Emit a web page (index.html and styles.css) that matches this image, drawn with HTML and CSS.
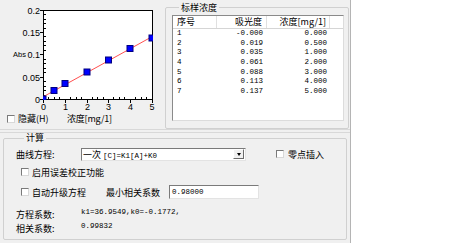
FILE: index.html
```html
<!DOCTYPE html>
<html>
<head>
<meta charset="utf-8">
<title>标样浓度</title>
<link rel="stylesheet" href="styles.css">
</head>
<body>
<div class="app">
  <div class="panel top">
    <div class="chart">
      <svg class="plot" width="160" height="112" viewBox="0 0 160 112">
        <defs>
          <clipPath id="plotclip"><rect x="43" y="10" width="110" height="90"/></clipPath>
        </defs>
        <g class="grid">
          <line x1="65.5" y1="11" x2="65.5" y2="99"/>
          <line x1="87.5" y1="11" x2="87.5" y2="99"/>
          <line x1="108.5" y1="11" x2="108.5" y2="99"/>
          <line x1="130.5" y1="11" x2="130.5" y2="99"/>
          <line x1="44" y1="32.5" x2="152" y2="32.5"/>
          <line x1="44" y1="54.5" x2="152" y2="54.5"/>
          <line x1="44" y1="77.5" x2="152" y2="77.5"/>
        </g>
        <rect class="frame" x="43.5" y="10.5" width="109" height="89"/>
        <g class="ticks">
          <line x1="40" y1="10.5" x2="43" y2="10.5"/>
          <line x1="40" y1="32.5" x2="43" y2="32.5"/>
          <line x1="40" y1="54.5" x2="43" y2="54.5"/>
          <line x1="40" y1="77.5" x2="43" y2="77.5"/>
          <line x1="40" y1="99.5" x2="43" y2="99.5"/>
          <line x1="43.5" y1="100" x2="43.5" y2="103"/>
          <line x1="65.5" y1="100" x2="65.5" y2="103"/>
          <line x1="87.5" y1="100" x2="87.5" y2="103"/>
          <line x1="108.5" y1="100" x2="108.5" y2="103"/>
          <line x1="130.5" y1="100" x2="130.5" y2="103"/>
          <line x1="152.5" y1="100" x2="152.5" y2="103"/>
        </g>
        <g class="minor">
          <line x1="44" y1="14.5" x2="46" y2="14.5"/><line x1="44" y1="19.5" x2="46" y2="19.5"/><line x1="44" y1="23.5" x2="46" y2="23.5"/><line x1="44" y1="28.5" x2="46" y2="28.5"/>
          <line x1="44" y1="36.5" x2="46" y2="36.5"/><line x1="44" y1="41.5" x2="46" y2="41.5"/><line x1="44" y1="45.5" x2="46" y2="45.5"/><line x1="44" y1="50.5" x2="46" y2="50.5"/>
          <line x1="44" y1="59.5" x2="46" y2="59.5"/><line x1="44" y1="63.5" x2="46" y2="63.5"/><line x1="44" y1="68.5" x2="46" y2="68.5"/><line x1="44" y1="72.5" x2="46" y2="72.5"/>
          <line x1="44" y1="81.5" x2="46" y2="81.5"/><line x1="44" y1="86.5" x2="46" y2="86.5"/><line x1="44" y1="90.5" x2="46" y2="90.5"/><line x1="44" y1="95.5" x2="46" y2="95.5"/>
          <line x1="48.5" y1="97" x2="48.5" y2="99"/><line x1="54.5" y1="97" x2="54.5" y2="99"/><line x1="59.5" y1="97" x2="59.5" y2="99"/>
          <line x1="70.5" y1="97" x2="70.5" y2="99"/><line x1="76.5" y1="97" x2="76.5" y2="99"/><line x1="81.5" y1="97" x2="81.5" y2="99"/>
          <line x1="92.5" y1="97" x2="92.5" y2="99"/><line x1="97.5" y1="97" x2="97.5" y2="99"/><line x1="103.5" y1="97" x2="103.5" y2="99"/>
          <line x1="113.5" y1="97" x2="113.5" y2="99"/><line x1="119.5" y1="97" x2="119.5" y2="99"/><line x1="124.5" y1="97" x2="124.5" y2="99"/>
          <line x1="135.5" y1="97" x2="135.5" y2="99"/><line x1="141.5" y1="97" x2="141.5" y2="99"/><line x1="146.5" y1="97" x2="146.5" y2="99"/>
        </g>
        <line class="fit" x1="43" y1="96.9" x2="152" y2="36.7"/>
        <g class="pts" clip-path="url(#plotclip)">
          <rect x="40" y="96" width="6" height="6"/>
          <rect x="51" y="87.5" width="6" height="6"/>
          <rect x="62" y="80.5" width="6" height="6"/>
          <rect x="84" y="69" width="6" height="6"/>
          <rect x="105.5" y="57" width="6" height="6"/>
          <rect x="127" y="45.5" width="6" height="6"/>
          <rect x="149" y="35" width="6" height="6"/>
        </g>
        <g class="ylab">
          <text x="40" y="13.5">0.2</text>
          <text x="40" y="35.5">0.15</text>
          <text x="40" y="57.5">0.1</text>
          <text x="40" y="80.5">0.05</text>
          <text x="40" y="102.5">0</text>
        </g>
        <text class="abs" x="13" y="57">Abs</text>
        <g class="xlab">
          <text x="43.5" y="110">0</text>
          <text x="65.5" y="110">1</text>
          <text x="87.5" y="110">2</text>
          <text x="108.5" y="110">3</text>
          <text x="130.5" y="110">4</text>
          <text x="152" y="110">5</text>
        </g>
      </svg>
      <div class="chart-foot">
        <label class="check hide-check"><span class="box"></span>隐藏(H)</label>
        <span class="axis-title">浓度[mg/1]</span>
      </div>
    </div>

    <fieldset class="group std">
      <legend>标样浓度</legend>
      <div class="list">
        <div class="list-row list-head">
          <span class="c1">序号</span><span class="c2">吸光度</span><span class="c3">浓度[mg/1]</span><span class="c4"></span>
        </div>
        <div class="list-row"><span class="c1">1</span><span class="c2">-0.000</span><span class="c3">0.000</span></div>
        <div class="list-row"><span class="c1">2</span><span class="c2">0.019</span><span class="c3">0.500</span></div>
        <div class="list-row"><span class="c1">3</span><span class="c2">0.035</span><span class="c3">1.000</span></div>
        <div class="list-row"><span class="c1">4</span><span class="c2">0.061</span><span class="c3">2.000</span></div>
        <div class="list-row"><span class="c1">5</span><span class="c2">0.088</span><span class="c3">3.000</span></div>
        <div class="list-row"><span class="c1">6</span><span class="c2">0.113</span><span class="c3">4.000</span></div>
        <div class="list-row"><span class="c1">7</span><span class="c2">0.137</span><span class="c3">5.000</span></div>
      </div>
    </fieldset>
  </div>

  <div class="panel bottom">
    <fieldset class="group calc">
      <legend>计算</legend>
      <div class="row r1">
        <span class="lbl">曲线方程:</span>
        <div class="combo">
          <span class="combo-text">一次 <span class="mono">[C]=K1[A]+K0</span></span>
          <span class="combo-btn"><i></i></span>
        </div>
        <label class="check zero"><span class="box"></span>零点插入</label>
      </div>
      <div class="row r2">
        <label class="check"><span class="box"></span>启用误差校正功能</label>
      </div>
      <div class="row r3">
        <label class="check auto"><span class="box"></span>自动升级方程</label>
        <span class="minlbl">最小相关系数</span>
        <div class="field mono">0.98000</div>
      </div>
      <div class="row r4">
        <span class="lbl">方程系数:</span>
        <span class="val mono">k1=36.9549,k0=-0.1772,</span>
      </div>
      <div class="row r5">
        <span class="lbl">相关系数:</span>
        <span class="val mono">0.99832</span>
      </div>
    </fieldset>
  </div>
</div>
</body>
</html>
```

FILE: styles.css
```css
body {
	margin: 0;
	background: #ffffff;
	font-family: "Noto Sans CJK SC", "Liberation Sans", sans-serif;
	font-size: 9px;
	color: #000;
}
.app {
	width: 350px;
	height: 243px;
	background: #f0f0f0;
	border-right: 1px solid #b4b4b4;
}
.mono {
	font-family: "Liberation Mono", "DejaVu Sans Mono", monospace;
	font-size: 7.5px;
}

/* top panel */
.panel.top {
	display: flex;
	height: 129px;
	border-bottom: 1px solid #d8d8d8;
}
.chart {
	width: 160px;
	display: flex;
	flex-direction: column;
}
.plot {
	display: block;
}
.plot .frame {
	fill: #ffffff;
	stroke: #000;
	stroke-width: 1;
}
.plot .grid line {
	stroke: #000;
	stroke-width: 1;
	stroke-dasharray: 2 2;
}
.plot .ticks line,
.plot .minor line {
	stroke: #000;
	stroke-width: 1;
}
.plot .fit {
	stroke: #ff5050;
	stroke-width: 1;
}
.plot .pts rect {
	fill: #0000ff;
	stroke: #000080;
	stroke-width: 1;
}
.plot text {
	font-family: "Liberation Sans", sans-serif;
	font-size: 9px;
	fill: #000;
}
.plot .ylab text {
	text-anchor: end;
}
.plot .xlab text {
	text-anchor: middle;
}
.plot .abs {
	font-size: 7.5px;
}
.chart-foot {
	display: flex;
	align-items: center;
	height: 12px;
	margin-top: 1px;
	line-height: 10px;
}
.hide-check {
	width: 67px;
	padding-left: 7px;
	box-sizing: border-box;
}
.axis-title {
	letter-spacing: -0.2px;
}

.check {
	display: flex;
	align-items: center;
	gap: 3px;
	white-space: nowrap;
}
.check .box {
	width: 6px;
	height: 6px;
	background: #ffffff;
	border: 1px solid;
	border-color: #7a7a7a #d8d8d8 #d8d8d8 #7a7a7a;
}

/* group boxes */
.group {
	margin: 0;
	min-width: 0;
	border: 1px solid #d0d0d0;
	border-radius: 2px;
	box-sizing: border-box;
}
.group legend {
	line-height: 10px;
	padding: 0 2px;
}
.group.std {
	margin: 2px 0 0 5px;
	width: 184px;
	height: 127px;
	padding: 2px 4px 7px 6px;
}
.group.std legend {
	margin-left: 7px;
	line-height: 11px;
}

.list {
	width: 172px;
	height: 106px;
	box-sizing: border-box;
	background: #ffffff;
	border: 1px solid #8a8a8a;
	border-right-color: #dcdcdc;
	border-bottom-color: #dcdcdc;
}
.list-row {
	display: flex;
	height: 9.7px;
	line-height: 9.7px;
	font-family: "Liberation Mono", "DejaVu Sans Mono", monospace;
	font-size: 7.5px;
}
.list-head {
	height: 12px;
	line-height: 12px;
	border-bottom: 1px solid #d5d5d5;
	font-family: "Noto Sans CJK SC", "Liberation Sans", sans-serif;
	font-size: 9px;
}
.list-row span {
	display: block;
	box-sizing: border-box;
	white-space: nowrap;
}
.c1 {
	width: 44px;
	padding-left: 4px;
}
.c2 {
	width: 50px;
	text-align: right;
	padding-right: 4px;
}
.c3 {
	width: 63px;
	text-align: right;
	padding-right: 3px;
}
.c4 {
	flex: 1;
}
.list-head .c1,
.list-head .c2,
.list-head .c3 {
	border-right: 1px solid #e0e0e0;
}

/* bottom panel */
.panel.bottom {
	margin-top: 2px;
	height: 111px;
	border-top: 1px solid #d8d8d8;
}
.group.calc {
	margin: 0 3px 0 3px;
	height: 107px;
	padding: 4px 0 0 12px;
}
.group.calc legend {
	margin-left: 8px;
}
.row {
	display: flex;
	align-items: center;
	height: 14px;
}
.r2 {
	margin-top: 4px;
	padding-left: 5px;
}
.r3 {
	margin-top: 5px;
	height: 16px;
}
.r4 {
	margin-top: 7px;
}
.lbl {
	width: 65px;
}
.combo {
	width: 165px;
	height: 13px;
	box-sizing: border-box;
	display: flex;
	align-items: center;
	justify-content: space-between;
	background: #ffffff;
	border: 1px solid #7a7a7a;
	border-right-color: #e3e3e3;
	border-bottom-color: #e3e3e3;
	padding-left: 1px;
}
.combo-text {
	white-space: nowrap;
}
.combo-btn {
	width: 11px;
	height: 10px;
	box-sizing: border-box;
	display: flex;
	align-items: center;
	justify-content: center;
	background: #f0f0f0;
	border: 1px solid;
	border-color: #ffffff #6a6a6a #6a6a6a #ffffff;
	margin-right: 1px;
}
.combo-btn i {
	width: 0;
	height: 0;
	border-left: 2.5px solid transparent;
	border-right: 2.5px solid transparent;
	border-top: 3px solid #000;
}
.check.zero {
	margin-left: 30px;
	gap: 4px;
}
.r3 .check.auto {
	width: 90px;
	padding-left: 5px;
	box-sizing: border-box;
}
.minlbl {
	width: 63px;
}
.field {
	width: 90px;
	height: 14px;
	line-height: 12px;
	box-sizing: border-box;
	padding-left: 2px;
	background: #ffffff;
	border: 1px solid #7a7a7a;
	border-right-color: #e3e3e3;
	border-bottom-color: #e3e3e3;
}
.val {
	margin-top: -4px;
}
```
